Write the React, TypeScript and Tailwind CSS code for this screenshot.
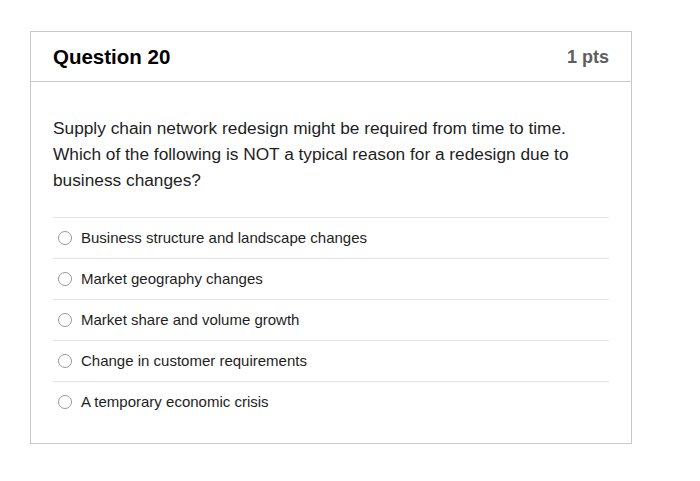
const answers = [
  "Business structure and landscape changes",
  "Market geography changes",
  "Market share and volume growth",
  "Change in customer requirements",
  "A temporary economic crisis",
];

export default function App() {
  return (
    <div className="min-h-[481px] w-[700px] bg-white pt-[31px] pl-[30px] font-['Liberation_Sans',Arial,sans-serif] text-[#1a1a1a]">
      <div className="w-[602px] h-[413px] border border-[#c9c9c9] flex flex-col">
        <header className="h-[50px] border-b border-[#c9c9c9] flex items-center justify-between px-[22px]">
          <h1 className="text-[20.5px] font-bold text-black mt-[2px]">Question 20</h1>
          <span className="text-[18px] font-bold text-[#5e5e5e] mt-[2px]">1 pts</span>
        </header>

        <div className="px-[22px] pt-[33px]">
          <p className="text-[17.3px] leading-[26px] text-[#1e1e1e]">
            Supply chain network redesign might be required from time to time.
            Which of the following is NOT a typical reason for a redesign due to
            business changes?
          </p>

          <ul className="mt-[24px]">
            {answers.map((a) => (
              <li
                key={a}
                className="h-[41px] border-t border-[#e3e3e3] flex items-center pl-[5px] gap-[9px]"
              >
                <span className="w-[14px] h-[14px] rounded-full border border-[#9a9a9a] bg-white shrink-0" />
                <span className="text-[15px] text-[#1e1e1e]">{a}</span>
              </li>
            ))}
          </ul>
        </div>
      </div>
    </div>
  );
}
